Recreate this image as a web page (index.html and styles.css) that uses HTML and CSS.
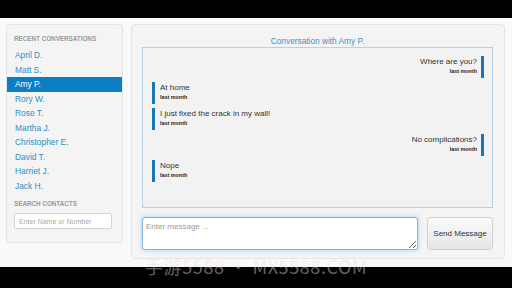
FILE: index.html
```html
<!DOCTYPE html>
<html lang="en">
<head>
  <meta charset="UTF-8">
  <title>Messages</title>
  <link rel="stylesheet" href="styles.css">
</head>
<body>
  <div class="page">
    <div class="sidebar">
      <p class="nav-header">Recent Conversations</p>
      <ul class="nav-list">
        <li><a href="#">April D.</a></li>
        <li><a href="#">Matt S.</a></li>
        <li class="active"><a href="#">Amy P.</a></li>
        <li><a href="#">Rory W.</a></li>
        <li><a href="#">Rose T.</a></li>
        <li><a href="#">Martha J.</a></li>
        <li><a href="#">Christopher E.</a></li>
        <li><a href="#">David T.</a></li>
        <li><a href="#">Harriet J.</a></li>
        <li><a href="#">Jack H.</a></li>
      </ul>
      <p class="nav-header search-header">Search Contacts</p>
      <input class="search" type="text" placeholder="Enter Name or Number">
    </div>

    <div class="chat">
      <p class="chat-title">Conversation with Amy P.</p>
      <div class="messages">
        <div class="msg mine">
          <span class="text">Where are you?</span>
          <span class="time">last month</span>
        </div>
        <div class="msg">
          <span class="text">At home</span>
          <span class="time">last month</span>
        </div>
        <div class="msg">
          <span class="text">I just fixed the crack in my wall!</span>
          <span class="time">last month</span>
        </div>
        <div class="msg mine">
          <span class="text">No complications?</span>
          <span class="time">last month</span>
        </div>
        <div class="msg">
          <span class="text">Nope</span>
          <span class="time">last month</span>
        </div>
      </div>
      <div class="compose">
        <textarea placeholder="Enter message ..." autofocus></textarea>
        <button>Send Message</button>
      </div>
    </div>
  </div>
  <div class="watermark">手游5588 · MX5588.COM</div>
</body>
</html>
```

FILE: styles.css
```css
* {
  padding: 0;
  margin: 0;
  box-sizing: border-box;
}
html, body {
  width: 100%;
  height: 100%;
}
body {
  position: relative;
  background-color: #000;
  padding-top: 18px;
  font-family: "Liberation Sans", Arial, sans-serif;
  color: #333;
  overflow: hidden;
}
.page {
  display: flex;
  align-items: flex-start;
  gap: 8px;
  height: 249px;
  padding: 6px 7px 0 6px;
  background-color: #f9f9f9;
}

/* left column */
.sidebar {
  width: 117px;
  background-color: #f4f4f4;
  border: 1px solid #e4e4e4;
  border-radius: 4px;
  padding: 9px 0 13px 0;
}
.nav-header {
  padding-left: 7px;
  font-size: 6.3px;
  line-height: 10px;
  font-weight: bold;
  text-transform: uppercase;
  color: #999;
  margin-bottom: 4px;
}
.nav-list {
  list-style: none;
}
.nav-list li a {
  display: block;
  height: 14.5px;
  line-height: 14.5px;
  padding-left: 8px;
  font-size: 8.4px;
  color: #2a8fc6;
  text-decoration: none;
}
.nav-list li.active a {
  background-color: #0b7fc6;
  color: #fff;
}
.search-header {
  margin-top: 6px;
  margin-bottom: 4px;
}
.search {
  display: block;
  margin-left: 7px;
  width: 98px;
  height: 16px;
  padding: 0 4px;
  border: 1px solid #d6d6d6;
  border-radius: 2px;
  background-color: #fff;
  font-family: inherit;
  font-size: 7px;
}
.search::placeholder {
  color: #aaa;
}

/* conversation */
.chat {
  flex: 1;
  height: 235px;
  background-color: #f4f4f4;
  border: 1px solid #e4e4e4;
  border-radius: 4px;
  padding: 12px 11px 0 10px;
}
.chat-title {
  text-align: center;
  font-size: 8.3px;
  line-height: 9px;
  color: #3a8fc6;
  margin-bottom: 1px;
}
.messages {
  display: flex;
  flex-direction: column;
  gap: 4px;
  height: 161px;
  padding: 8px 8px 0 9px;
  background-color: #f2f2f2;
  border: 1px solid #b9d0e2;
}
.msg {
  display: flex;
  flex-direction: column;
  align-items: flex-start;
  align-self: flex-start;
  height: 22px;
  border-left: 3px solid #1b75b3;
  padding-left: 5px;
}
.msg.mine {
  align-items: flex-end;
  align-self: flex-end;
  border-left: none;
  border-right: 3px solid #1b75b3;
  padding-left: 0;
  padding-right: 4px;
}
.text {
  font-size: 8px;
  line-height: 11px;
  color: #333;
}
.time {
  font-size: 5.4px;
  line-height: 9px;
  font-weight: bold;
  color: #222;
}
.compose {
  display: flex;
  gap: 9px;
  margin-top: 9px;
}
textarea {
  flex: 1;
  height: 33px;
  padding: 3px 3px;
  border: 1px solid #86b6dc;
  border-radius: 3px;
  background-color: #fff;
  box-shadow: 0 0 4px rgba(82, 168, 236, 0.5);
  font-family: inherit;
  font-size: 8px;
  line-height: 11px;
  outline: none;
}
textarea::placeholder {
  color: #999;
}
button {
  width: 66px;
  height: 33px;
  border: 1px solid #d0d0d0;
  border-radius: 4px;
  background: linear-gradient(#fbfbfb, #e5e5e5);
  font-family: inherit;
  font-size: 8px;
  color: #333;
}

.watermark {
  position: absolute;
  left: 145px;
  top: 255px;
  font-family: "Noto Sans CJK SC", "Liberation Sans", sans-serif;
  font-size: 18px;
  line-height: 22px;
  letter-spacing: 0.6px;
  color: rgba(235, 220, 235, 0.45);
  pointer-events: none;
}
```
